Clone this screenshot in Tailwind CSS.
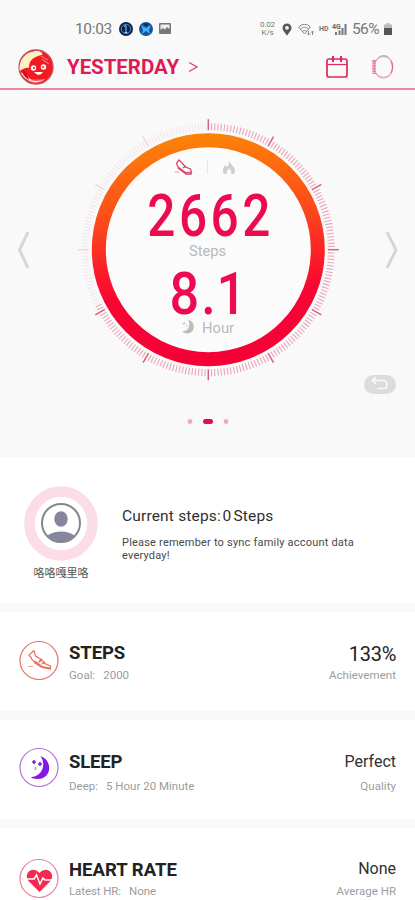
<!DOCTYPE html>
<html lang="en">
<head>
<meta charset="utf-8">
<meta name="viewport" content="width=device-width, initial-scale=1">
<title>Daily summary</title>
<script src="https://cdn.jsdelivr.net/npm/@tailwindcss/browser@4"></script>
</head>
<body class="w-[415px] h-[900px] overflow-hidden bg-[#f9f9f9] font-['Roboto','Noto_Sans_CJK_SC',sans-serif]">
<div class="h-[900px] overflow-hidden flex flex-col">
  <!-- Status bar -->
  <div class="h-[45px] shrink-0 pt-[13px] pl-[75px] pr-[23px] flex items-center justify-between text-[#777]">
    <div class="flex items-center gap-[6px]">
      <span class="text-[15.500px] leading-[20px] tracking-[-0.350px] w-[38px]">10:03</span>
      <svg width="14" height="14" viewBox="0 0 14 14"><circle cx="7" cy="7" r="7" fill="#0a2148"/><circle cx="7" cy="7" r="4.700" fill="none" stroke="#4c8fd0"/><path d="M5 4.500l2-1v7M5.500 10.500h3" stroke="#9bd0f5" fill="none"/></svg>
      <svg width="14" height="14" viewBox="0 0 14 14"><circle cx="7" cy="7" r="7" fill="#165594"/><path d="M2 3l5 3 5-3-2 5 1 4-4-3-4 3 1-4z" fill="#3db0ff"/><path d="M4 1.500l3 3 3-3z" fill="#082b4d"/></svg>
      <svg width="12" height="12" viewBox="0 0 12 12"><rect x="0" y="0" width="12" height="11" rx="1" fill="#777"/><path d="M1.500 7l2.500-2 2 1.500 2-2.500 2.500 2V1.500h-9z" fill="#eee"/></svg>
    </div>
    <div class="flex items-center">
      <div class="text-[8px] leading-[8px] text-center w-[17px] tracking-[-0.200px]">0.02<br>K/s</div>
      <svg class="ml-[6px]" width="10" height="13" viewBox="0 0 10 13"><path d="M5 12.500C2.500 9 .5 7.200.5 4.900a4.500 4.500 0 0 1 9 0C9.500 7.200 7.500 9 5 12.500z" fill="#555"/><circle cx="5" cy="4.800" r="1.900" fill="#f9f9f9"/></svg>
      <svg class="ml-[6px]" width="17" height="13" viewBox="0 0 17 13" fill="none" stroke="#888"><path d="M.7 4C4 .5 9 .5 12.300 4M2.500 6c2.500-2.300 5.500-2.300 8 0M4.500 8.200q2-1.600 4 0M.7 4l5.800 7 5.800-7"/><path d="M10.500 8v4m-1.300-1.500l1.300 1.500 1.300-1.500M14.500 12V8m-1.300 1.500L14.500 8l1.300 1.500"/></svg>
      <span class="ml-[4px] text-[7px] leading-[12px] font-bold w-[11px]">HD</span>
      <svg class="ml-[2px]" width="15" height="13" viewBox="0 0 15 13"><text x="0" y="6" font-size="7" font-weight="700" fill="#666">4G</text><path d="M3 12h2V9H3zM6.500 12h2V7.500h-2zM9.500 12h2V5h-2zM12.500 12h2V1h-2z" fill="#777"/></svg>
      <span class="ml-[5px] text-[15.500px] leading-[20px] w-[28px] tracking-[-0.600px]">56%</span>
      <svg class="ml-[4px]" width="8" height="12" viewBox="0 0 8 12"><path d="M2.500 0h3v1.500H8V12H0V1.500h2.500z" fill="#bbb"/><path d="M0 5h8v7H0z" fill="#555"/></svg>
    </div>
  </div>
  <!-- Title bar -->
  <header class="h-[45px] shrink-0 border-b-2 border-[#e58ba3] pl-[18px] pr-[21px] flex items-center justify-between">
    <div class="flex items-center">
      <svg width="36" height="36" viewBox="0 0 36 36"><circle cx="18" cy="18" r="17" fill="#f71920" stroke="#c94d58" stroke-width="1.300"/><path d="M1.800 22C0 10 9 1 21 2c3 1 4 3 3 4-10 2-13 6-13 13-3-1-6 1-9.200 3z" fill="#fff0c5"/><path d="M3 24c3-2 6 0 8 5 5 4 9 3 16 1-5 5-17 6-24-6z" fill="#ffe0d8"/><path d="M5 21c3 1 5 4 6 10-3-2-6-5-7-8z" fill="#d40d20"/><circle cx="15.500" cy="19" r="2.700" fill="#fff"/><circle cx="25.500" cy="18" r="2.700" fill="#fff"/><path d="M16 23q5 6 9 0z" fill="#fff"/><circle cx="16" cy="19" r="1" fill="#b31"/><circle cx="25" cy="18" r="1" fill="#b31"/><path d="M23 7l7 4M24 10l7 5M13 31h13" stroke="#e77880" stroke-width="1.200"/></svg>
      <span class="ml-[13px] w-[113px] text-[20.500px] leading-[24px] font-bold text-[#dd1b54] tracking-[-0.050px] whitespace-nowrap">YESTERDAY</span>
      <svg class="ml-[8px]" width="10" height="12" viewBox="0 0 10 12"><path d="M1 1.500L9 6 1 10.500" fill="none" stroke="#df4570" stroke-width="1.300"/></svg>
    </div>
    <div class="flex items-center gap-[23px]">
      <svg width="22" height="22" viewBox="0 0 22 22" fill="none" stroke="#dc2a5c" stroke-width="1.700"><rect x="1" y="3" width="20" height="18" rx="2"/><path d="M1 8.500h20" stroke-width="1.200"/><path d="M7 0v6M15 0v6" stroke-width="2"/></svg>
      <svg width="23" height="24" viewBox="0 0 23 24" fill="none"><ellipse cx="12.500" cy="12" rx="9.300" ry="10.700" stroke="#e9a0b4" stroke-width="1.300"/><path d="M8 2Q12-.5 17 2" stroke="#bbb" stroke-width="1.500"/><path d="M3 5v14" stroke="#e9809d" stroke-width="3.500" stroke-dasharray="2 .6"/><path d="M20 6q3 6 0 12" stroke="#dc7090" stroke-width="1.200"/></svg>
    </div>
  </header>
  <!-- Daily gauge -->
  <section class="h-[367px] shrink-0">
    <svg width="415" height="367" viewBox="0 90 415 367" font-family="Roboto, sans-serif">
      <defs>
        <linearGradient id="ring" gradientUnits="userSpaceOnUse" x1="200" y1="133" x2="216" y2="366"><stop offset="0" stop-color="#fb8508"/><stop offset=".12" stop-color="#fd700d"/><stop offset=".35" stop-color="#fc4a1b"/><stop offset=".55" stop-color="#fb2027"/><stop offset=".7" stop-color="#f80533"/><stop offset="1" stop-color="#f40037"/></linearGradient>
      </defs>
      <g id="ticks"></g>
      <circle cx="208.300" cy="249.700" r="109.500" fill="#fbfbfb" stroke="url(#ring)" stroke-width="14"/>
      <g fill="none" stroke="#d5436c" stroke-width="1.200"><path d="M179 160l-2.500 3 1.500 4 7.500 5.500 6-.5-1-3-5-2-3.500-4z"/><path d="M178 168l8 6h5l.5-2M183 168l3-2" stroke-width="1.400"/><path d="M174.500 172h5" stroke="#edb1c1"/></g>
      <path d="M207.500 160v14" stroke="#e5e5e5"/>
      <path d="M229 160c1 5 6 6 6 11l-1 3h-3c1-3-1-4-2-6-1 3-3 3-2 6h-3c-3-5 1-7 1-9l2 2c2-2 2-4 2-7z" fill="#cfcfcf"/>
      <text transform="translate(147.200 236) scale(.84 1)" font-size="59" font-weight="500" fill="#ed0b50" letter-spacing="4.200">2662</text>
      <text x="189" y="255.500" font-size="14" fill="#b9b9b9" textLength="37" lengthAdjust="spacingAndGlyphs">Steps</text>
      <g font-size="60" font-weight="500" fill="#ed0b50"><text transform="translate(169.500 314) scale(.87 1)">8<tspan x="36.500">.</tspan><tspan x="54">1</tspan></text></g>
      <path d="M188 319.500c9 3 7 14-1 14-2 0-4-1-4.500-2.500 5 1 9-5 5.500-11.500z" fill="#bdbdbd"/><path d="M184 322v3m-1.500-1.500h3M187 325v2" stroke="#ccc"/>
      <text x="202" y="333" font-size="14" fill="#b9b9b9" textLength="32" lengthAdjust="spacingAndGlyphs">Hour</text>
      <g fill="none" stroke="#d6d6d6" stroke-width="3"><path d="M28 232l-8.500 18 8.500 18"/><path d="M387 232l9 18-9 18"/></g>
      <rect x="364" y="375" width="32" height="19" rx="9.500" fill="#dcdcdc"/>
      <path d="M372.500 380.500h11c4.500 0 4.500 8 0 8h-6M376 377l-3.500 3.500 3.500 3.500" fill="none" stroke="#fafafa" stroke-width="1.700"/>
      <circle cx="190" cy="421.500" r="2.400" fill="#f2a9bc"/><rect x="203" y="419" width="10" height="5" rx="2.500" fill="#dc1249"/><circle cx="226" cy="421.500" r="2.400" fill="#f2a9bc"/>
    </svg>
  </section>
  <!-- Family account -->
  <section class="h-[146px] shrink-0 bg-white flex">
    <div class="w-[122px] pt-[29px] flex flex-col items-center">
      <svg width="74" height="75" viewBox="0 0 74 75"><ellipse cx="37" cy="37.500" rx="31.500" ry="32" fill="#fff" stroke="#fcdde6" stroke-width="10.500"/><clipPath id="face"><circle cx="37" cy="37" r="18.500"/></clipPath><g clip-path="url(#face)" fill="#8585a0"><ellipse cx="37" cy="33" rx="6.700" ry="7.700"/><ellipse cx="37" cy="55" rx="16" ry="9.500"/></g><circle cx="37" cy="37" r="19" fill="none" stroke="#85858f" stroke-width="2"/></svg>
      <span class="mt-[5px] text-[11px] leading-[16px] text-[#555]">咯咯嘎里咯</span>
    </div>
    <div class="pt-[49px] text-[#303030]">
      <p class="text-[15.500px] leading-[21px] whitespace-nowrap tracking-[0.180px]">Current steps:<span class="ml-[1.500px]">0</span><span class="ml-[2px]">Steps</span></p>
      <p class="mt-[9px] text-[11px] leading-[13px] w-[260px] tracking-[0.200px] text-[#484848]">Please remember to sync family account data<br>everyday!</p>
    </div>
  </section>
  <!-- Metrics -->
  <section class="mt-[9px] h-[99px] shrink-0 bg-white pl-[19px] pr-[19px] flex">
    <svg class="mt-[28px] shrink-0" width="40" height="41" viewBox="0 0 40 41" fill="none" stroke="#e57465"><circle cx="20" cy="20.500" r="19" stroke-width="1.200"/><path d="M15 10.500l-5 4.500 2.500 3c0 3 2 3 5 4l6 5 8 2v-3l-5-2-5-5-5-3z" stroke-width="1.200"/><path d="M15 22l8 5 8 1.500M20 22l3-3m0 5l3-2" stroke-width="2"/><path d="M9 26.500h5" stroke="#efaaa1"/></svg>
    <div class="ml-[10px] pt-[29px] grow">
      <h2 class="text-[18.500px] leading-[24px] font-bold text-[#222] tracking-[-0.100px]">STEPS</h2>
      <p class="mt-[3px] text-[11.500px] leading-[14px] text-[#9c9c9c]">Goal:<span class="ml-[8px]">2000</span></p>
    </div>
    <div class="pt-[30px] text-right">
      <p class="text-[20px] leading-[24px] text-[#222] tracking-[-0.300px]">133%</p>
      <p class="mt-[2px] text-[11.500px] leading-[14px] text-[#9c9c9c] tracking-[0.050px]">Achievement</p>
    </div>
  </section>
  <section class="mt-[9px] h-[99px] shrink-0 bg-white pl-[19px] pr-[19px] flex">
    <svg class="mt-[27px] shrink-0" width="40" height="41" viewBox="0 0 40 41"><circle cx="20" cy="20.500" r="19" fill="none" stroke="#b273d8" stroke-width="1.200"/><path d="M21.500 9c13 5 11 23-3 23-3 0-6-1-6.500-2 10 0 16-11 9.500-21z" fill="#8518e6"/><path d="M15 13v4m-2-2h4M21 15v4m-2-2h4" stroke="#7c20dc" stroke-width="1.600"/><path d="M16.500 20v3" stroke="#bd83e7" stroke-width="1.500"/></svg>
    <div class="ml-[10px] pt-[30px] grow">
      <h2 class="text-[18.500px] leading-[24px] font-bold text-[#222] tracking-[-0.150px]">SLEEP</h2>
      <p class="mt-[5px] text-[11.500px] leading-[14px] text-[#9c9c9c]">Deep:<span class="ml-[8px]">5 Hour 20 Minute</span></p>
    </div>
    <div class="pt-[30px] text-right">
      <p class="text-[16px] leading-[24px] text-[#303030]">Perfect</p>
      <p class="mt-[5px] text-[11.500px] leading-[14px] text-[#9c9c9c] tracking-[0.050px]">Quality</p>
    </div>
  </section>
  <section class="mt-[9px] h-[99px] shrink-0 bg-white pl-[19px] pr-[19px] flex">
    <svg class="mt-[30px] shrink-0" width="40" height="41" viewBox="0 0 40 41"><circle cx="20" cy="20.500" r="19" fill="none" stroke="#e58299" stroke-width="1.200"/><path d="M20.500 34L9.500 23C4 16 13 7 20.500 15 28 7 37 16 31.500 23z" fill="#f42b50"/><path d="M7 21h8l2.500-4 3.500 9 3-6 2 2h8" fill="none" stroke="#fff" stroke-width="1.500"/></svg>
    <div class="ml-[10px] pt-[30px] grow">
      <h2 class="text-[18.500px] leading-[24px] font-bold text-[#222]">HEART RATE</h2>
      <p class="mt-[2px] text-[11.500px] leading-[14px] text-[#9c9c9c]"><span class="tracking-[-0.100px]">Latest HR:</span><span class="ml-[8px]">None</span></p>
    </div>
    <div class="pt-[29px] text-right">
      <p class="text-[16px] leading-[24px] text-[#303030]">None</p>
      <p class="mt-[3px] text-[11.500px] leading-[14px] text-[#9c9c9c]">Average HR</p>
    </div>
  </section>
</div>
<script>
  // Dial marks: one every 1.5 degrees, a longer one every 30 degrees.
  const dial = document.getElementById('ticks');
  for (let i = 0; i < 240; i++) {
    const line = document.createElementNS('http://www.w3.org/2000/svg', 'line');
    const major = i % 20 === 0, active = i <= 162;
    const attrs = {
      x1: 208.3, x2: 208.3, y1: 249.7 - (major ? 130.5 : 126.5), y2: 249.7 - 119.5,
      stroke: active ? (major ? '#df5d82' : '#eda5b8') : (major ? '#f2d5dc' : '#f5e6ea'),
      'stroke-width': major ? 1.5 : 1.1,
      transform: `rotate(${i * 1.5} 208.3 249.7)`
    };
    for (const k in attrs) line.setAttribute(k, attrs[k]);
    dial.appendChild(line);
  }
</script>
</body>
</html>
